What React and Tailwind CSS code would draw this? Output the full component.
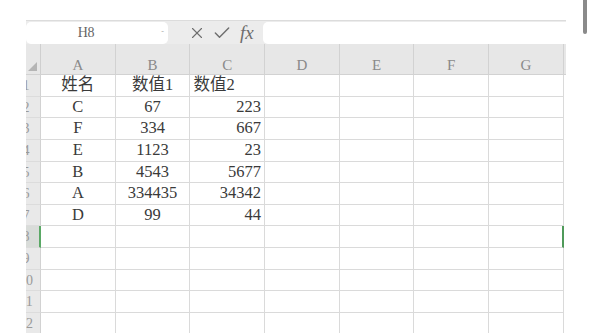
import { X, Check } from 'lucide-react'

const cols = ['A', 'B', 'C', 'D', 'E', 'F', 'G']

const rows = [
  { n: 1, a: '姓名', b: '数值1', c: '数值2', cLeft: true },
  { n: 2, a: 'C', b: '67', c: '223' },
  { n: 3, a: 'F', b: '334', c: '667' },
  { n: 4, a: 'E', b: '1123', c: '23' },
  { n: 5, a: 'B', b: '4543', c: '5677' },
  { n: 6, a: 'A', b: '334435', c: '34342' },
  { n: 7, a: 'D', b: '99', c: '44' },
  { n: 8, selected: true },
  { n: 9 },
  { n: 10 },
  { n: 11 },
  { n: 12 },
]

export default function App() {
  return (
    <div
      className="relative w-[592px] h-[333px] bg-white overflow-hidden"
      style={{ fontFamily: '"Liberation Serif", "Noto Sans CJK SC", serif' }}
    >
      {/* scrollbar thumb */}
      <div className="absolute right-[5px] top-0 w-[4px] h-[34px] bg-[#8a8a8a] rounded-b-full" />

      <div className="pt-[20px] pl-[26px] w-[566px]">
        {/* formula bar */}
        <div className="flex items-center h-[24px] border-t border-[#dcdcdc] bg-[#ececec]">
          <div className="relative flex items-center justify-center w-[142px] h-[22px] pr-[22px] bg-white rounded-[5px]">
            <span className="text-[14px] text-[#666] tracking-tight">H8</span>
            <span className="absolute right-[4px] top-[6px] text-[8px] text-[#aaa] leading-none">-</span>
          </div>
          <div className="flex items-center w-[95px] pl-[20px] gap-[6px] text-[#6d6d6d]">
            <X size={18} strokeWidth={1.5} />
            <Check size={20} strokeWidth={1.7} />
            <span className="text-[19px] italic leading-none ml-[2px]" style={{ fontFamily: '"Liberation Serif", serif' }}>fx</span>
          </div>
          <div className="flex-1 h-[22px] bg-white rounded-l-[5px]" />
        </div>

        {/* column headers */}
        <div className="flex h-[31px] bg-[#e7e7e7] border-b border-[#d2d2d2]">
          <div className="relative w-[15px] shrink-0 border-r border-[#cfcfcf]">
            <div className="absolute right-[3px] bottom-[3px] w-0 h-0 border-l-[9px] border-l-transparent border-b-[9px] border-b-[#b5b5b5]" />
          </div>
          {cols.map((c) => (
            <div
              key={c}
              className="w-[74.7px] shrink-0 flex items-end justify-center pb-[1px] leading-none text-[15px] text-[#8a8a8a] border-r border-[#d2d2d2]"
            >
              {c}
            </div>
          ))}
        </div>

        {/* rows */}
        {rows.map((r) => (
          <div key={r.n} className="flex h-[21.65px]">
            <div
              className={
                'w-[15px] shrink-0 overflow-hidden border-b border-[#dcdcdc] ' +
                (r.selected ? 'bg-[#d9dcd9] border-r-2 border-r-[#5aa865]' : 'bg-[#e9e9e9] border-r border-r-[#d2d2d2]')
              }
            >
              <div className="w-[32px] ml-[-16px] text-center text-[14px] leading-[21px] text-[#9a9a9a]">{r.n}</div>
            </div>
            <div className="w-[74.7px] shrink-0 border-r border-b border-[#dadada] flex items-center justify-center text-[16.5px] text-[#3a3a3a]">
              {r.a}
            </div>
            <div className="w-[74.7px] shrink-0 border-r border-b border-[#dadada] flex items-center justify-center text-[16.5px] text-[#3a3a3a]">
              {r.b}
            </div>
            <div
              className={
                'w-[74.7px] shrink-0 border-r border-b border-[#dadada] flex items-center text-[16.5px] text-[#3a3a3a] ' +
                (r.cLeft ? 'justify-start pl-[3px]' : 'justify-end pr-[3px]')
              }
            >
              {r.c}
            </div>
            {['D', 'E', 'F'].map((c) => (
              <div key={c} className="w-[74.7px] shrink-0 border-r border-b border-[#dadada]" />
            ))}
            <div
              className={
                'w-[74.7px] shrink-0 border-b border-[#dadada] ' +
                (r.selected ? 'border-r-2 border-r-[#4f9a5a]' : 'border-r border-r-[#dadada]')
              }
            />
          </div>
        ))}
      </div>
    </div>
  )
}
